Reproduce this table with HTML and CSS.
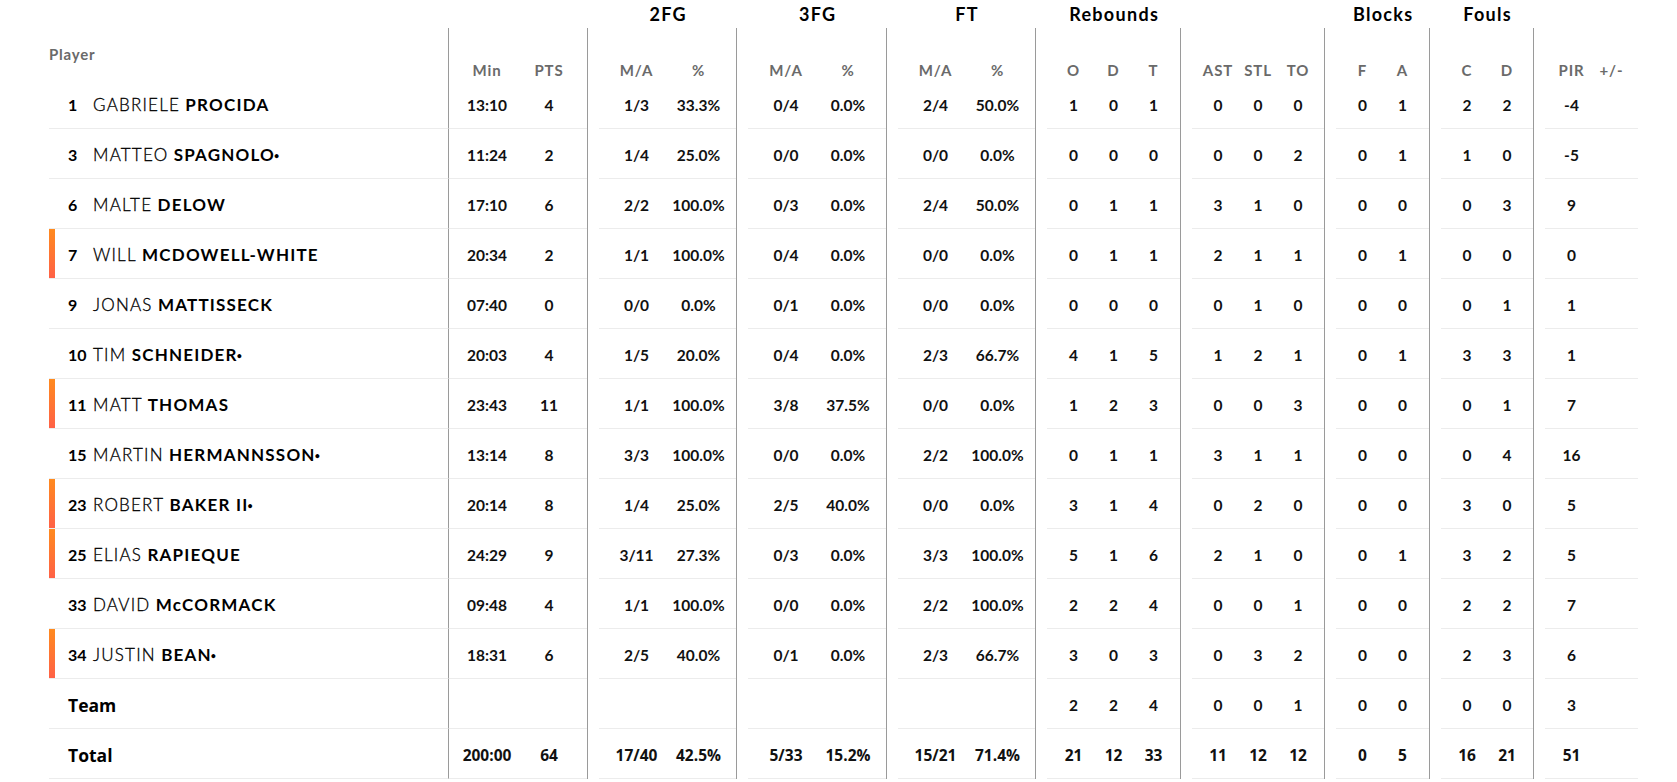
FILE: index.html
```html
<!DOCTYPE html>
<html lang="en">
<head>
<meta charset="utf-8">
<title>Box score</title>
<link rel="stylesheet" href="styles.css">
</head>
<body>
<div class="board">
  <div class="row groups">
    <div class="g g-2fg">2FG</div>
    <div class="g g-3fg">3FG</div>
    <div class="g g-ft">FT</div>
    <div class="g g-reb">Rebounds</div>
    <div class="g g-blk">Blocks</div>
    <div class="g g-fls">Fouls</div>
  </div>
  <div class="row subs">
    <div class="c player"><span class="plabel">Player</span></div>
    <div class="c min">Min</div><div class="c r7">PTS</div>
    <div class="sp"></div><div class="c l">M/A</div><div class="c r">%</div>
    <div class="sp"></div><div class="c l7">M/A</div><div class="c r7">%</div>
    <div class="sp"></div><div class="c l">M/A</div><div class="c r">%</div>
    <div class="sp"></div><div class="c l">O</div><div class="c">D</div><div class="c r">T</div>
    <div class="sp"></div><div class="c l6">AST</div><div class="c">STL</div><div class="c r6">TO</div>
    <div class="sp"></div><div class="c l">F</div><div class="c r">A</div>
    <div class="sp"></div><div class="c l6">C</div><div class="c r6">D</div>
    <div class="sp"></div><div class="c l">PIR</div><div class="c r">+/-</div>
  </div>
</div>
<script src="app.js"></script>
</body>
</html>
```
FILE: app.js
```js
const players = [
  [false,"1","GABRIELE","PROCIDA",false,"13:10","4","1/3","33.3%","0/4","0.0%","2/4","50.0%","1","0","1","0","0","0","0","1","2","2","-4",""],
  [false,"3","MATTEO","SPAGNOLO",true,"11:24","2","1/4","25.0%","0/0","0.0%","0/0","0.0%","0","0","0","0","0","2","0","1","1","0","-5",""],
  [false,"6","MALTE","DELOW",false,"17:10","6","2/2","100.0%","0/3","0.0%","2/4","50.0%","0","1","1","3","1","0","0","0","0","3","9",""],
  [true,"7","WILL","MCDOWELL-WHITE",false,"20:34","2","1/1","100.0%","0/4","0.0%","0/0","0.0%","0","1","1","2","1","1","0","1","0","0","0",""],
  [false,"9","JONAS","MATTISSECK",false,"07:40","0","0/0","0.0%","0/1","0.0%","0/0","0.0%","0","0","0","0","1","0","0","0","0","1","1",""],
  [false,"10","TIM","SCHNEIDER",true,"20:03","4","1/5","20.0%","0/4","0.0%","2/3","66.7%","4","1","5","1","2","1","0","1","3","3","1",""],
  [true,"11","MATT","THOMAS",false,"23:43","11","1/1","100.0%","3/8","37.5%","0/0","0.0%","1","2","3","0","0","3","0","0","0","1","7",""],
  [false,"15","MARTIN","HERMANNSSON",true,"13:14","8","3/3","100.0%","0/0","0.0%","2/2","100.0%","0","1","1","3","1","1","0","0","0","4","16",""],
  [true,"23","ROBERT","BAKER II",true,"20:14","8","1/4","25.0%","2/5","40.0%","0/0","0.0%","3","1","4","0","2","0","0","0","3","0","5",""],
  [true,"25","ELIAS","RAPIEQUE",false,"24:29","9","3/11","27.3%","0/3","0.0%","3/3","100.0%","5","1","6","2","1","0","0","1","3","2","5",""],
  [false,"33","DAVID","McCORMACK",false,"09:48","4","1/1","100.0%","0/0","0.0%","2/2","100.0%","2","2","4","0","0","1","0","0","2","2","7",""],
  [true,"34","JUSTIN","BEAN",true,"18:31","6","2/5","40.0%","0/1","0.0%","2/3","66.7%","3","0","3","0","3","2","0","0","2","3","6",""]
];
const team = ["","","","","","","","","2","2","4","0","0","1","0","0","0","0","3",""];
const total = ["200:00","64","17/40","42.5%","5/33","15.2%","15/21","71.4%","21","12","33","11","12","12","0","5","16","21","51",""];

const layout = [
  ["min"],["r7"],
  ["sp"],["l"],["r"],
  ["sp"],["l7"],["r7"],
  ["sp"],["l"],["r"],
  ["sp"],["l"],[""],["r"],
  ["sp"],["l6"],[""],["r6"],
  ["sp"],["l"],["r"],
  ["sp"],["l6"],["r6"],
  ["sp"],["l"],["r"]
];

function statCells(vals) {
  let html = "", i = 0;
  for (const col of layout) {
    if (col[0] === "sp") { html += '<div class="sp"></div>'; continue; }
    html += '<div class="c ' + col[0] + '">' + vals[i++] + '</div>';
  }
  return html;
}

const board = document.querySelector(".board");
let out = "";
for (const p of players) {
  const [bar, num, first, last, star] = p;
  out += '<div class="row data">' +
    '<div class="c player"><span class="bar' + (bar ? ' on' : '') + '"></span>' +
    '<span class="num">' + num + '</span>' +
    '<span class="name"><span class="first">' + first + '</span> <span class="last">' + last + '</span>' +
    (star ? '<span class="star">&bull;</span>' : '') + '</span></div>' +
    statCells(p.slice(5)) + '</div>';
}
out += '<div class="row data team"><div class="c player"><span class="bar"></span><span class="tlabel">Team</span></div>' + statCells(team) + '</div>';
out += '<div class="row data total"><div class="c player"><span class="bar"></span><span class="tlabel">Total</span></div>' + statCells(total) + '</div>';
board.insertAdjacentHTML("beforeend", out);
```
FILE: styles.css
```css
html, body {
  margin: 0;
  padding: 0;
  background: #fff;
}
body {
  font-family: "Lato", "Liberation Sans", sans-serif;
  color: #111;
}
.board {
  padding-left: 49px;
  --cols: 399px 70px 69px 12px 68.5px 68.5px 12px 69px 69px 12px 68.5px 68.5px 12px 46.5px 40px 46.5px 12px 46px 40px 46px 12px 46.5px 46.5px 12px 46px 46px 12px 46.5px 46.5px;
}
.row {
  display: grid;
  grid-template-columns: var(--cols);
}
.groups {
  height: 28px;
}
.g {
  display: flex;
  align-items: center;
  justify-content: center;
  font-weight: 700;
  font-size: 18px;
  letter-spacing: 1.3px;
  text-indent: 1.3px;
  color: #000;
}
.g-2fg { grid-column: 5 / 7; }
.g-3fg { grid-column: 8 / 10; }
.g-ft { grid-column: 11 / 13; }
.g-reb { grid-column: 14 / 17; }
.g-blk { grid-column: 22 / 24; }
.g-fls { grid-column: 25 / 27; }

.sp {
  border-left: 1px solid #9a9a9a;
}
.c {
  display: flex;
  align-items: center;
  justify-content: center;
  box-sizing: border-box;
}
.l { padding-left: 6.5px; }
.r { padding-right: 6.5px; }
.l7 { padding-left: 7px; }
.r7 { padding-right: 7px; }
.l6 { padding-left: 6px; }
.r6 { padding-right: 6px; }
.min {
  border-left: 1px solid #9a9a9a;
  padding-left: 7px;
}

.subs {
  height: 51px;
}
.subs .c {
  align-items: flex-end;
  font-size: 15px;
  font-weight: 700;
  letter-spacing: 0.9px;
  color: #6a6a6a;
  line-height: 17px;
}
.subs .player {
  align-items: center;
  justify-content: flex-start;
  letter-spacing: 0.8px;
}
.plabel {
  padding-top: 2px;
}

.data {
  height: 50px;
}
.data .c {
  border-bottom: 1px solid #ececec;
  font-size: 15.5px;
  font-weight: 700;
  padding-top: 2px;
}
.data .player {
  justify-content: flex-start;
  align-items: stretch;
  padding-top: 0;
}
.bar {
  width: 6px;
  margin-right: 13px;
  flex: none;
}
.bar.on {
  background: linear-gradient(to bottom, #ff8a1e, #ff6146);
}
.num {
  min-width: 25px;
  align-self: center;
  padding-top: 2px;
  font-size: 16px;
  color: #000;
}
.name {
  align-self: center;
  padding-top: 2px;
  font-size: 17px;
  letter-spacing: 1.2px;
  white-space: nowrap;
  color: #000;
}
.first {
  font-weight: 300;
  -webkit-text-stroke: 0.3px #000;
}
.last {
  font-weight: 700;
}
.star {
  font-size: 9px;
  letter-spacing: 0;
  vertical-align: 2px;
  margin-left: -1px;
}
.tlabel {
  align-self: center;
  padding-top: 2px;
  font-family: "Open Sans", "Liberation Sans", sans-serif;
  font-size: 17.5px;
  font-weight: 700;
  color: #000;
}
.total .c:not(.player) {
  font-family: "Open Sans", "Liberation Sans", sans-serif;
  font-size: 15.5px;
}
```
